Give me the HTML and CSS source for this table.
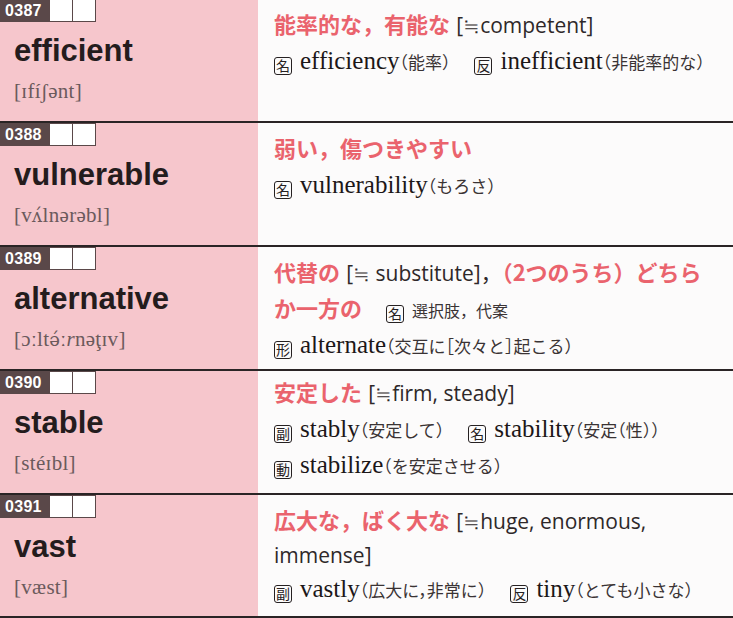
FILE: index.html
```html
<!DOCTYPE html>
<html lang="ja">
<head>
<meta charset="utf-8">
<title>Vocabulary 0387-0391</title>
<link rel="stylesheet" href="styles.css">
</head>
<body>
<main class="page">
  <section class="entry">
    <div class="head">
      <div class="tag"><span class="num">0387</span><span class="chk"></span><span class="chk"></span></div>
      <div class="word">efficient</div>
      <div class="pron">[ɪfíʃənt]</div>
    </div>
    <div class="body">
      <div class="line"><span class="ja">能率的な，有能な</span> <span class="syn">[≒competent]</span></div>
      <div class="line"><span class="pos">名</span><span class="en">efficiency</span><span class="gl">（能率）</span><span class="pos sep">反</span><span class="en">inefficient</span><span class="gl">（非能率的な）</span></div>
    </div>
  </section>

  <section class="entry">
    <div class="head">
      <div class="tag"><span class="num">0388</span><span class="chk"></span><span class="chk"></span></div>
      <div class="word">vulnerable</div>
      <div class="pron">[v<span class="stress">ʌ́</span>lnərəbl]</div>
    </div>
    <div class="body">
      <div class="line"><span class="ja">弱い，傷つきやすい</span></div>
      <div class="line"><span class="pos">名</span><span class="en">vulnerability</span><span class="gl">（もろさ）</span></div>
    </div>
  </section>

  <section class="entry">
    <div class="head">
      <div class="tag"><span class="num">0389</span><span class="chk"></span><span class="chk"></span></div>
      <div class="word">alternative</div>
      <div class="pron">[ɔːlt<span class="stress">ə́</span>ː<i>r</i>nəţɪv]</div>
    </div>
    <div class="body">
      <div class="line"><span class="ja">代替の</span> <span class="syn">[≒ substitute]，</span><span class="ja">（2つのうち）どちら</span></div>
      <div class="line"><span class="ja">か一方の</span><span class="pos sep">名</span><span class="gl plain">選択肢，代案</span></div>
      <div class="line"><span class="pos">形</span><span class="en">alternate</span><span class="gl">（交互に［次々と］起こる）</span></div>
    </div>
  </section>

  <section class="entry">
    <div class="head">
      <div class="tag"><span class="num">0390</span><span class="chk"></span><span class="chk"></span></div>
      <div class="word">stable</div>
      <div class="pron">[stéɪbl]</div>
    </div>
    <div class="body tight">
      <div class="line"><span class="ja">安定した</span> <span class="syn">[≒firm, steady]</span></div>
      <div class="line"><span class="pos">副</span><span class="en">stably</span><span class="gl">（安定して）</span><span class="pos sep">名</span><span class="en">stability</span><span class="gl">（安定（性））</span></div>
      <div class="line"><span class="pos">動</span><span class="en">stabilize</span><span class="gl">（を安定させる）</span></div>
    </div>
  </section>

  <section class="entry last">
    <div class="head">
      <div class="tag"><span class="num">0391</span><span class="chk"></span><span class="chk"></span></div>
      <div class="word">vast</div>
      <div class="pron">[væst]</div>
    </div>
    <div class="body snug">
      <div class="line"><span class="ja">広大な，ばく大な</span> <span class="syn">[≒huge, enormous,</span></div>
      <div class="line"><span class="syn">immense]</span></div>
      <div class="line"><span class="pos">副</span><span class="en">vastly</span><span class="gl">（広大に，非常に）</span><span class="pos sep">反</span><span class="en">tiny</span><span class="gl">（とても小さな）</span></div>
    </div>
  </section>
</main>
</body>
</html>
```

FILE: styles.css
```css
html, body {
  margin: 0;
  padding: 0;
  background: #fcfbfb;
}

.page {
  margin-top: -3px;
  width: 733px;
}

.entry {
  display: grid;
  grid-template-columns: 258px 1fr;
  height: 124px;
  box-sizing: border-box;
  border-top: 2px solid #2a2425;
}

.entry.last {
  height: 125px;
  border-bottom: 2px solid #2a2425;
}

.head {
  background: #f6c6cc;
}

.tag {
  display: flex;
  height: 23px;
}

.num {
  width: 50px;
  box-sizing: border-box;
  padding-left: 5px;
  background: #5a4849;
  color: #ffffff;
  font: bold 16px/23px "Liberation Sans", Arial, sans-serif;
  letter-spacing: 0.3px;
}

.chk {
  width: 23px;
  box-sizing: border-box;
  background: #ffffff;
  border: 1px solid #5a4849;
  border-left: none;
}

.word {
  margin-top: 11px;
  padding-left: 14px;
  font: bold 31px/36px "Liberation Sans", Arial, sans-serif;
  color: #241c1d;
}

.pron {
  margin-top: 10px;
  padding-left: 14px;
  font: 21px/24px "Liberation Serif", "DejaVu Serif", serif;
  letter-spacing: 0.3px;
  color: #6b5a5c;
}

.stress {
  font-family: "DejaVu Serif", serif;
  font-size: 18px;
}

.body {
  padding: 8px 0 0 16px;
  font: 25px/36px "Liberation Serif", "DejaVu Serif", serif;
  color: #1f1a1b;
}

.body.tight {
  padding-top: 4px;
}

.body.snug .line {
  height: 34px;
}

.line {
  white-space: nowrap;
  height: 36px;
}

.ja {
  font: bold 22px "Noto Sans CJK JP", sans-serif;
  color: #ea636d;
}

.syn {
  font: 21px "Open Sans", "Noto Sans CJK JP", sans-serif;
  color: #2e2829;
}

.en {
  font-family: "Liberation Serif", serif;
  font-size: 25px;
  color: #1c1718;
}

.gl {
  font: 17px "Noto Sans CJK JP", sans-serif;
  font-feature-settings: "halt";
  color: #3a3334;
}

.gl.plain {
  font-feature-settings: normal;
  font-size: 16px;
}

.pos {
  display: inline-block;
  width: 18px;
  height: 18px;
  box-sizing: border-box;
  margin-right: 8px;
  border: 1.4px solid #262122;
  border-radius: 3px;
  font: 14px/15px "Noto Sans CJK JP", sans-serif;
  text-align: center;
  color: #262122;
  vertical-align: -2px;
}

.pos.sep {
  margin-left: 24px;
}
```
